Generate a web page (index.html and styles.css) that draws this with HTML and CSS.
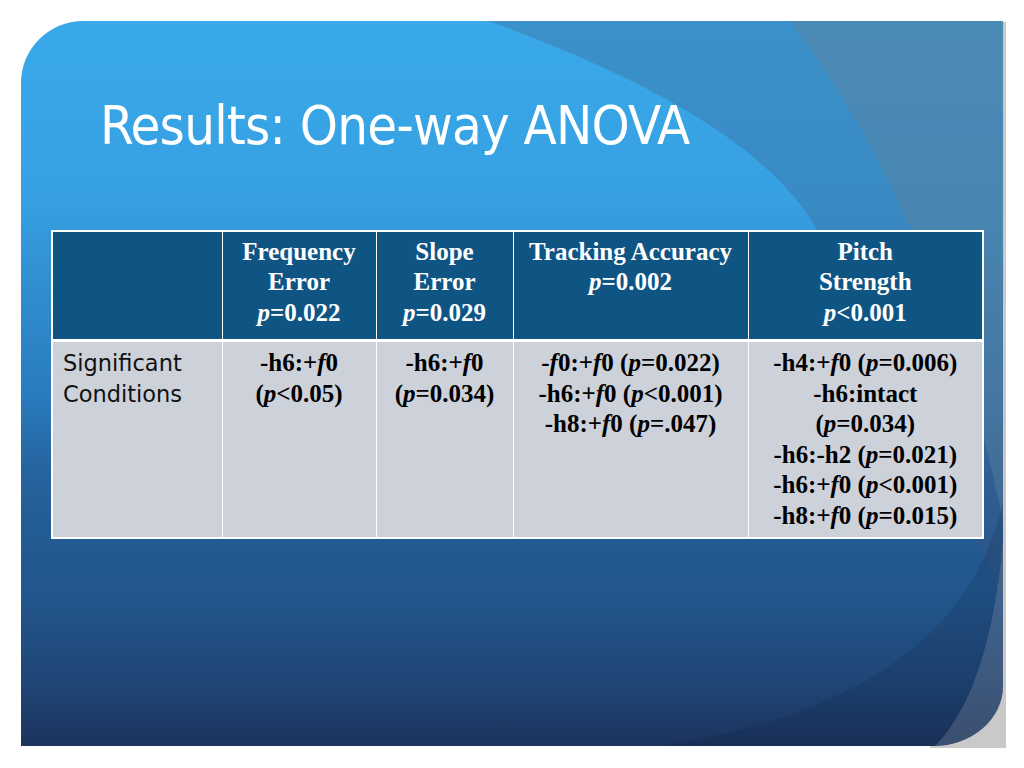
FILE: index.html
```html
<!DOCTYPE html>
<html lang="en">
<head>
<meta charset="utf-8">
<title>Results: One-way ANOVA</title>
<link rel="stylesheet" href="styles.css">
</head>
<body>
<div class="stage">
  <div class="shadow"></div>
  <div class="slide">
    <svg class="bg" viewBox="0 0 982 725" width="982" height="725" aria-hidden="true">
      <g transform="translate(-21,-21)">
        <path class="band-b" d="M488,21 Q790,130 830,260 Q930,430 1003,600 L1003,21 Z"/>
        <path class="band-c" d="M790,21 Q940,220 1003,520 L1003,21 Z"/>
        <path class="band-d" d="M1003,500 Q960,700 660,746 L1003,746 Z"/>
        <path class="band-e" d="M1003,540 Q990,690 935,746 L1003,746 Z"/>
      </g>
    </svg>
    <div class="content">
      <h1 class="title">Results: One-way ANOVA</h1>
      <table class="anova">
        <colgroup>
          <col class="c1"><col class="c2"><col class="c3"><col class="c4"><col class="c5">
        </colgroup>
        <thead>
          <tr>
            <th></th>
            <th>Frequency<br>Error<br><i>p</i>=0.022</th>
            <th>Slope<br>Error<br><i>p</i>=0.029</th>
            <th>Tracking Accuracy<br><i>p</i>=0.002</th>
            <th>Pitch<br>Strength<br><i>p</i>&lt;0.001</th>
          </tr>
        </thead>
        <tbody>
          <tr>
            <td class="label">Significant<br>Conditions</td>
            <td>-h6:+<i>f</i>0<br>(<i>p</i>&lt;0.05)</td>
            <td>-h6:+<i>f</i>0<br>(<i>p</i>=0.034)</td>
            <td>-<i>f</i>0:+<i>f</i>0 (<i>p</i>=0.022)<br>-h6:+<i>f</i>0 (<i>p</i>&lt;0.001)<br>-h8:+<i>f</i>0 (<i>p</i>=.047)</td>
            <td>-h4:+<i>f</i>0 (<i>p</i>=0.006)<br>-h6:intact<br>(<i>p</i>=0.034)<br>-h6:-h2 (<i>p</i>=0.021)<br>-h6:+<i>f</i>0 (<i>p</i>&lt;0.001)<br>-h8:+<i>f</i>0 (<i>p</i>=0.015)</td>
          </tr>
        </tbody>
      </table>
    </div>
  </div>
</div>
</body>
</html>
```

FILE: styles.css
```css
html, body {
  margin: 0;
  padding: 0;
  background: #ffffff;
}

.stage {
  position: relative;
  width: 1024px;
  height: 768px;
  padding: 21px 0 0 21px;
  box-sizing: border-box;
}

.shadow {
  position: absolute;
  left: 930px;
  top: 22px;
  width: 76px;
  height: 726px;
  background: #c9c9c9;
}

.slide {
  position: relative;
  width: 982px;
  height: 725px;
  overflow: hidden;
  border-radius: 62px 0 70px 0 / 62px 0 60px 0;
  background: linear-gradient(180deg,
    #39a9ea 0%,
    #36a0e2 25%,
    #2f8ccd 38%,
    #2a7bbd 52%,
    #26649f 62%,
    #235a92 72%,
    #22558b 80%,
    #1f4676 91%,
    #1c345d 100%);
}

.bg {
  position: absolute;
  left: 0;
  top: 0;
}

.band-b { fill: rgba(66, 88, 125, 0.3); }
.band-c { fill: rgba(97, 129, 153, 0.4); }
.band-d { fill: rgba(15, 25, 55, 0.15); }
.band-e { fill: rgba(140, 150, 170, 0.3); }

.content {
  position: relative;
  padding: 73px 0 0 30px;
}

.title {
  margin: 0 0 0 49px;
  font-family: "Liberation Sans Narrow", "DejaVu Sans Condensed", sans-serif;
  font-weight: normal;
  font-size: 54px;
  letter-spacing: -0.8px;
  line-height: 1.2;
  color: #ffffff;
}

.anova {
  margin-top: 71px;
  width: 931px;
  table-layout: fixed;
  border-collapse: collapse;
  border: 2px solid #ffffff;
  font-family: "Liberation Serif", "Times New Roman", serif;
  font-weight: bold;
  font-size: 25px;
  line-height: 30.5px;
}

.c1 { width: 170px; }
.c2 { width: 154px; }
.c3 { width: 137px; }
.c4 { width: 235px; }
.c5 { width: 235px; }

.anova th,
.anova td {
  border: 1px solid #ffffff;
  vertical-align: top;
  text-align: center;
  padding: 0 4px;
}

.anova th {
  background: #0f5584;
  color: #ffffff;
  padding-top: 5px;
  padding-bottom: 11px;
  border-bottom: 3px solid #ffffff;
  font-weight: bold;
}

.anova td {
  background: #cdd1da;
  color: #000000;
  padding-top: 6px;
  padding-bottom: 6px;
}

.anova td.label {
  text-align: left;
  padding-left: 10px;
  font-family: "DejaVu Sans", sans-serif;
  font-weight: normal;
  font-size: 22.5px;
  color: #111111;
}
```
